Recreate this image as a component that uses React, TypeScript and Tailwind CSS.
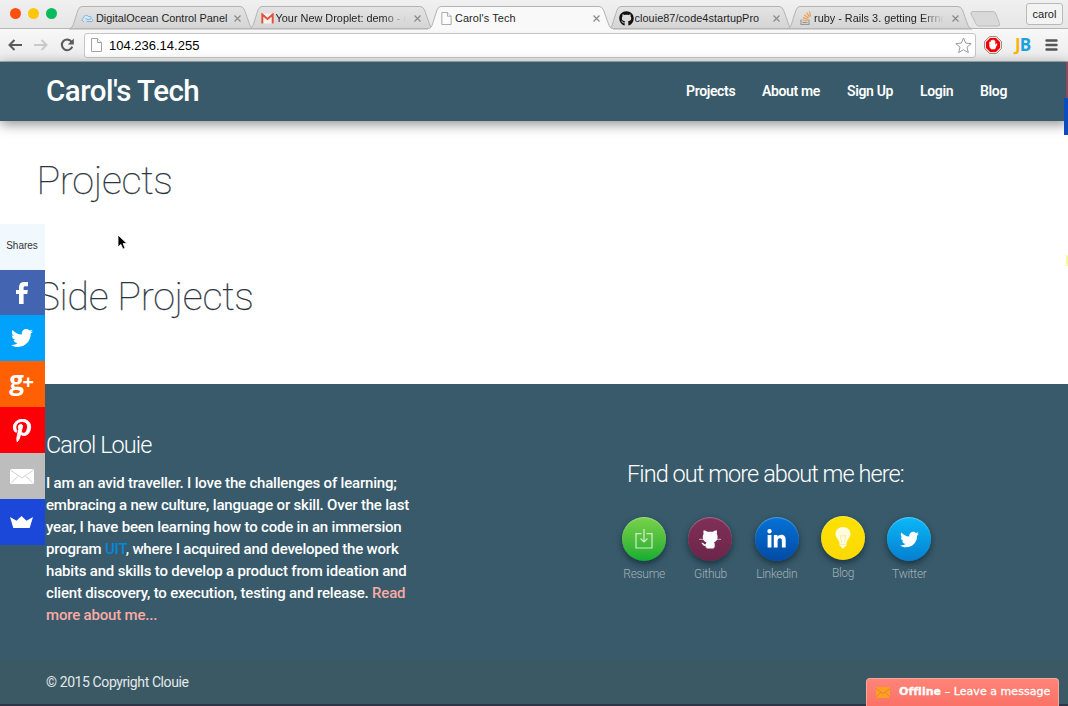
import type { ReactNode } from "react";
import { FaGithub, FaLinkedinIn, FaPinterestP, FaTwitter } from "react-icons/fa";

function PageIcon({ className }: { className: string }) {
  return (
    <svg className={className} viewBox="0 0 11 14" fill="#fdfdfd" stroke="#a3a3a3">
      <path d="M.5.5h6l4 4v9H.5z" />
      <path d="M6.5.5v4h4" />
    </svg>
  );
}

function CloseIcon() {
  return (
    <svg className="h-[7px] w-[7px] shrink-0" viewBox="0 0 7 7" stroke="#8a8a8a" strokeWidth="1.2">
      <path d="M.5.5l6 6M6.5.5l-6 6" />
    </svg>
  );
}

type TabProps = {
  icon: ReactNode;
  title: string;
  active?: boolean;
  faded?: boolean;
  titleClass: string;
};

function Tab({ icon, title, active, faded, titleClass }: TabProps) {
  return (
    <div className={"relative -mr-[6.500px] h-[23px] w-[186px] shrink-0 " + (active ? "z-10" : "")}>
      <svg className="absolute inset-0 h-[24px] w-[186px]" viewBox="0 0 186 24">
        <defs>
          <linearGradient id="tabfill" x1="0" y1="0" x2="0" y2="1">
            <stop offset="0" stopColor="#e4e4e4" />
            <stop offset="1" stopColor="#d3d3d3" />
          </linearGradient>
        </defs>
        <path
          d="M0 22.5 C3 22.5 3.5 20.5 4.5 18 L9 4 Q10.5 .5 13 .5 H171 Q174 .5 175.5 4 L180.500 18 C181.500 20.500 182 22.500 185 22.500 V24 H0z"
          fill={active ? "#f9f9f9" : "url(#tabfill)"}
        />
        <path
          d="M0 22.5 C3 22.5 3.5 20.5 4.5 18 L9 4 Q10.5 .5 13 .5 H171 Q174 .5 175.5 4 L180.500 18 C181.500 20.500 182 22.500 185 22.500"
          fill="none"
          stroke="#b4b4b4"
        />
        {!active && <path d="M0 22.500H186" stroke="#b5b5b5" />}
      </svg>
      <div className="relative flex h-[24px] items-center pl-[11px]">
        <span className="flex w-[15px] shrink-0 items-center justify-center">{icon}</span>
        <span
          className={
            "ml-px w-[134px] overflow-hidden whitespace-nowrap text-[10.9px] leading-[14px] text-[#1f1f1f] " +
            titleClass +
            (faded ? " [mask-image:linear-gradient(to_right,black_80%,transparent_97%)]" : "")
          }
        >
          {title}
        </span>
        <span className="ml-[4px] flex">
          <CloseIcon />
        </span>
      </div>
    </div>
  );
}

function CloudIcon() {
  return (
    <svg className="h-[9px] w-[13px]" viewBox="0 0 13 9" fill="#d5e9f7" stroke="#79b5e3">
      <path d="M3 7.500C.6 7.500.3 4.600 2.400 4.100 2.600 1.200 6.300.4 7.600 2.700c1.800-.6 3.400.3 2.600 1.800C8.800 6 6 5.500 4.500 4.500M6 7.500h4.800c1.300 0 1.500-1.700.3-2.200" />
    </svg>
  );
}

function GmailIcon() {
  return (
    <svg className="h-[11px] w-[13px]" viewBox="0 0 13 11">
      <path d="M.5.500h12v10H.5z" fill="#f4f1f0" />
      <path d="M1.300 10.500V1.500l5.200 4.400 5.200-4.400v9" fill="none" stroke="#e2513b" strokeWidth="2" />
    </svg>
  );
}

function StackIcon() {
  return (
    <svg className="h-[14px] w-[12px]" viewBox="0 0 12 14" fill="none">
      <path d="M1 8.500v5h8v-5" stroke="#999" strokeWidth="1.200" />
      <path d="M2.500 11.500h5" stroke="#999" strokeWidth="1.300" />
      <path d="M2.500 9l5.200.5M3 6.600l5 1.600M4.300 4l4.300 2.900M6.600 1.700l3 4.200M9.500.4l1 5" stroke="#eda050" strokeWidth="1.200" />
    </svg>
  );
}

function BrowserChrome() {
  return (
    <div className="flex h-[62px] flex-col font-['Liberation_Sans',Arial,sans-serif]">
      <div className="flex h-[29px] items-start bg-gradient-to-b from-[#f0f0f0] to-[#e6e6e6] shadow-[inset_0_-1px_0_#b5b5b5]">
        <div className="flex w-[69px] shrink-0 gap-[7px] pt-[8px] pl-[10px]">
          <span className="h-[11px] w-[11px] rounded-full bg-[#fc4f10]" />
          <span className="h-[11px] w-[11px] rounded-full bg-[#fdc50b]" />
          <span className="h-[11px] w-[11px] rounded-full bg-[#06bc5c]" />
        </div>
        <div className="flex pt-[6px]">
          <Tab icon={<CloudIcon />} title="DigitalOcean Control Panel" titleClass="" />
          <Tab icon={<GmailIcon />} title="Your New Droplet: demo - c" titleClass="" faded />
          <Tab icon={<PageIcon className="h-[13px] w-[11px]" />} title="Carol's Tech" titleClass="tracking-[0.100px]" active />
          <Tab icon={<FaGithub className="h-[15px] w-[15px] text-[#111]" />} title="clouie87/code4startupPro" titleClass="tracking-[0.050px]" />
          <Tab icon={<StackIcon />} title="ruby - Rails 3. getting Errno" titleClass="" faded />
        </div>
        <svg className="mt-[11px] ml-[3px] h-[16px] w-[31px] shrink-0" viewBox="0 0 31 16">
          <path d="M3 .5h20q2 0 3 2.500l3.500 9.500q.8 2.500-1.500 2.500H9q-2 0-3-2L1 3Q.300.500 3 .500z" fill="#d9d9d9" stroke="#bcbcbc" />
        </svg>
        <div className="mt-[3px] ml-[25.500px] flex h-[22px] w-[37px] shrink-0 items-center justify-center rounded-[3px] border border-[#b9b9b9] bg-[#f3f3f3] text-[11px] text-[#222]">
          carol
        </div>
      </div>
      <div className="flex h-[33px] items-center border-b border-[#a8aeb0] bg-gradient-to-b from-[#f8f8f8] to-[#ebebeb] pl-[8px]">
        <svg className="h-[12px] w-[14px]" viewBox="0 0 14 12" fill="none" stroke="#5a5a5a" strokeWidth="2">
          <path d="M14 6H1.500M6.500 1l-5 5 5 5" />
        </svg>
        <svg className="ml-[12px] h-[12px] w-[14px]" viewBox="0 0 14 12" fill="none" stroke="#c9c9c9" strokeWidth="2">
          <path d="M0 6h12.500M7.500 1l5 5-5 5" />
        </svg>
        <svg className="ml-[12px] h-[14px] w-[14px]" viewBox="0 0 14 14" fill="none" stroke="#5a5a5a" strokeWidth="2.100">
          <path d="M11.700 4.100A5.300 5.300 0 1 0 12.200 8.600" />
          <path d="M13.800.4v6H7.800z" fill="#5a5a5a" stroke="none" />
        </svg>
        <div className="ml-[10px] flex h-[25px] w-[892px] items-center rounded-[3px] border border-[#c6c6c6] bg-white pl-[6px]">
          <PageIcon className="h-[14px] w-[11px]" />
          <span className="ml-[7px] flex-1 pt-[1px] text-[13px] text-black">104.236.14.255</span>
          <svg className="mr-[3px] h-[17px] w-[17px]" viewBox="0 0 17 17" fill="#fff" stroke="#999" strokeLinejoin="round">
            <path d="M8.500 1l2.200 5.100 5.500.5-4.200 3.600 1.300 5.400-4.800-2.900-4.800 2.900L5 10.200.8 6.600l5.500-.5z" />
          </svg>
        </div>
        <svg className="ml-[8px] h-[18px] w-[18px]" viewBox="0 0 18 18">
          <path d="M5.500.7h7l4.800 4.800v7l-4.800 4.800h-7L.7 12.500v-7z" fill="#fff" stroke="#8c4a40" strokeWidth=".8" />
          <path d="M6 2h6l4 4v6l-4 4H6l-4-4V6z" fill="#f00505" />
          <path d="M5.300 9.800V6q.8-1 1.500 0V4.500q.8-1 1.500 0V4q.8-1 1.500 0v.7q.8-.9 1.500 0v4.100l1-1.300q1.200-.2 1 .8l-2.300 4.900H7.200Q5.300 11.800 5.300 9.800z" fill="#fff" />
        </svg>
        <div className="ml-[13px] w-[18px] font-['Open_Sans',sans-serif] text-[17px] leading-[18px] font-bold tracking-[-1px]">
          <span className="text-[#f6b60d]">J</span>
          <span className="text-[#1ba1dc]">B</span>
        </div>
        <svg className="ml-[12px] h-[12px] w-[13px]" viewBox="0 0 13 12" fill="none" stroke="#555" strokeWidth="2.400" strokeLinecap="round">
          <path d="M1.500 1.500h10M1.500 6h10M1.500 10.500h10" />
        </svg>
      </div>
    </div>
  );
}

function SiteHeader() {
  return (
    <header className="relative z-10 flex h-[59px] items-center bg-[#385a6a] pb-[1px] pl-[46px] text-white shadow-[0_3px_12px_rgba(0,0,0,0.45)]">
      <h1 className="w-[640px] text-[29.500px] leading-[34px] font-medium tracking-[-0.500px]">Carol's Tech</h1>
      <nav className="flex gap-[27px] text-[14px] font-semibold tracking-[-0.350px] whitespace-nowrap">
        <a className="w-[49px]">Projects</a>
        <a className="w-[58px]">About me</a>
        <a className="w-[46px]">Sign Up</a>
        <a className="w-[33px]">Login</a>
        <a className="w-[27px]">Blog</a>
      </nav>
    </header>
  );
}

function ShareBar() {
  const tile = "flex h-[46px] items-center justify-center pr-[2px] ";
  return (
    <aside className="absolute top-[224px] left-0 z-20 w-[45px] text-white">
      <div className="flex h-[46px] items-center justify-center bg-[#f1f9fe] pr-[1px] pb-[3px] font-['Liberation_Sans',Arial,sans-serif] text-[10px] text-[#333]">
        Shares
      </div>
      <div className="flex h-[45px] items-center justify-center bg-[#4364b0] pr-[1px]">
        <svg className="h-[22px] w-[12px]" viewBox="0 0 12 22" fill="#fff">
          <path d="M3 22V12H0V8h3V5.300C3 1.900 4.900 0 8.300 0H12v4.200H9.300C8 4.200 7.600 4.800 7.600 6v2h4.200l-.5 4H7.600v10z" />
        </svg>
      </div>
      <div className={tile + "bg-[#00a2fb]"}>
        <FaTwitter className="h-[22px] w-[22px]" />
      </div>
      <div className={tile + "bg-[#fe6003] font-['Open_Sans',sans-serif] leading-none font-bold"}>
        <span className="-mt-[8px] flex items-center">
          <span className="text-[26px] tracking-[-1.500px]">g</span>
          <span className="pt-[4px] text-[20px]">+</span>
        </span>
      </div>
      <div className={tile + "bg-[#fb0006]"}>
        <FaPinterestP className="h-[23px] w-[20px] stroke-white stroke-[22px]" />
      </div>
      <div className={tile + "bg-[#bdbdbd]"}>
        <svg className="h-[15px] w-[24px]" viewBox="0 0 24 16" preserveAspectRatio="none">
          <rect width="24" height="16" rx="2" fill="#fff" />
          <path d="M1 1.500l11 8 11-8M1.500 14.500l7-7M22.500 14.500l-7-7" fill="none" stroke="#cfcfcf" />
        </svg>
      </div>
      <div className={tile + "bg-[#1c48da]"}>
        <svg className="h-[12px] w-[23px]" viewBox="0 0 23 12" fill="#fff">
          <path d="M0 1l6.500 3.800L11.500 0l5 4.800L23 1l-3.300 11H3.300z" />
        </svg>
      </div>
    </aside>
  );
}

function DownloadGlyph() {
  return (
    <svg className="h-[20px] w-[18px]" viewBox="0 0 18 20" fill="none" stroke="#fff" strokeOpacity=".75" strokeWidth="1.200">
      <path d="M6.500 4.600H1v14.400h16V4.600h-5.500M9 0v13M5.500 9.500L9 13l3.500-3.500" />
    </svg>
  );
}

function OctocatGlyph() {
  return (
    <svg className="h-[20px] w-[24px]" viewBox="0 0 24 20">
      <path d="M1 10.300h22" stroke="#fff" strokeOpacity=".7" strokeWidth=".9" />
      <path
        d="M5.600 1.200c1.500 0 2.800.8 3.700 1.600h5.600c.9-.8 2.200-1.600 3.700-1.600.5 1.400.5 2.700.2 3.700.8 1.300 1 3 .6 4.700-.5 2.300-1.700 3.200-3.300 3.700.5.800.6 1.700.6 2.700v2.400h-1v1H8.700v-1H7.600v-1.600c-1.700.3-2.500-.3-3-1.300-.4-.8-.8-1.200-1.300-1.600 1.200-.5 2.100.1 2.600.8.500.7 1.100.8 1.800.5.100-.7.300-1.300.7-1.900-1.900-.5-3-1.500-3.400-3.700-.4-1.700-.2-3.400.6-4.700-.3-1-.3-2.300 0-3.700z"
        fill="#fff"
      />
    </svg>
  );
}

function BulbGlyph() {
  return (
    <svg className="h-[22px] w-[16px]" viewBox="0 0 16 22">
      <path d="M8 0c4.400 0 7.500 3 7.500 7 0 3.500-2.800 5-3.800 8.500H4.300C3.300 12 .5 10.500.5 7c0-4 3.100-7 7.500-7zM4.500 15.500h7v3l-1.500 1.300L8 21.800l-2-2-1.500-1.300z" fill="#fffbe0" />
      <path d="M6.600 15.500L5.200 8l1.500 1.200L8 8l1.300 1.200L10.800 8l-1.400 7.500M4.500 17.500h7" fill="none" stroke="#f2e68a" strokeWidth=".7" />
    </svg>
  );
}

const links = [
  { label: "Resume", glyph: <DownloadGlyph />, fill: "from-[#76d14a] to-[#08ad31]", shift: "" },
  { label: "Github", glyph: <OctocatGlyph />, fill: "from-[#803058] to-[#6c2549]", shift: "" },
  { label: "Linkedin", glyph: <FaLinkedinIn className="h-[21px] w-[21px]" />, fill: "from-[#0473d6] to-[#044aa5]", shift: "" },
  { label: "Blog", glyph: <BulbGlyph />, fill: "from-[#fde203] to-[#fbd903]", shift: "-mt-[1px]" },
  { label: "Twitter", glyph: <FaTwitter className="h-[19px] w-[19px]" />, fill: "from-[#0db8f8] to-[#067fd0]", shift: "" },
];

function Footer() {
  return (
    <footer className="flex flex-1 flex-col bg-[#385a6a] text-white">
      <div className="flex h-[275px]">
        <div className="w-[627px] pt-[46px] pl-[46px]">
          <h3 className="text-[23.500px] leading-[30px] font-light tracking-[-0.930px]">Carol Louie</h3>
          <p className="mt-[12px] text-[15px] leading-[22px] font-medium tracking-[-0.190px] whitespace-nowrap">
            I am an avid traveller. I love the challenges of learning;
            <br />
            embracing a new culture, language or skill. Over the last
            <br />
            year, I have been learning how to code in an immersion
            <br />
            program <a className="text-[#0488de]">UIT</a>, where I acquired and developed the work
            <br />
            habits and skills to develop a product from ideation and
            <br />
            client discovery, to execution, testing and release. <a className="text-[#fbaaa4]">Read</a>
            <br />
            <a className="text-[#fbaaa4]">more about me...</a>
          </p>
        </div>
        <div className="pt-[75px]">
          <h3 className="text-[23.500px] leading-[30px] font-light tracking-[-0.930px] whitespace-nowrap">Find out more about me here:</h3>
          <div className="mt-[28px] -ml-[16px] flex">
            {links.map((l) => (
              <div key={l.label} className={"flex w-[66.300px] flex-col items-center " + l.shift}>
                <div
                  className={
                    "flex h-[44px] w-[44px] items-center justify-center rounded-full bg-gradient-to-b shadow-[0_3px_6px_rgba(10,25,35,0.6),inset_0_1px_1px_rgba(255,255,255,0.3)] " +
                    l.fill
                  }
                >
                  {l.glyph}
                </div>
                <span className="mt-[5px] text-[12px] leading-[16px] font-light tracking-[-0.300px] text-[#a3b0b8]">{l.label}</span>
              </div>
            ))}
          </div>
        </div>
      </div>
      <div className="flex flex-1 items-center border-b-2 border-[#2d3547] bg-[#3b5965] pt-px pl-[46px] text-[14px] tracking-[-0.400px] text-[#e3e8ea]">
        © 2015 Copyright Clouie
      </div>
    </footer>
  );
}

function ChatTab() {
  return (
    <div className="absolute right-[9px] bottom-0 z-20 flex h-[28px] w-[193px] items-center rounded-t-[4px] border border-b-0 border-[#f9a79e] bg-gradient-to-b from-[#ff8478] to-[#fb7166] pl-[9px] font-['DejaVu_Sans',Verdana,sans-serif] text-[11px] whitespace-nowrap text-white">
      <svg className="h-[11px] w-[14px] shrink-0" viewBox="0 0 14 11">
        <rect width="14" height="11" rx="1" fill="#fda01f" />
        <path d="M0 1.500l7 5 7-5M0 10l5-5M14 10L9 5" fill="none" stroke="#e9823a" />
      </svg>
      <span className="ml-[9px] tracking-[0.050px] [-webkit-text-stroke:0.300px_white]">
        <b>Offline</b> – Leave a message
      </span>
    </div>
  );
}

export default function App() {
  return (
    <div className="relative flex h-[706px] w-[1068px] flex-col overflow-hidden bg-white font-[Roboto,sans-serif]">
      <BrowserChrome />
      <SiteHeader />
      <main className="flex h-[263px] flex-col pl-[36.500px] text-[#2c3440]">
        <h2 className="mt-[36px] text-[39.500px] leading-[48px] font-thin tracking-[-0.350px] [-webkit-text-stroke:0.250px_#2c3440]">Projects</h2>
        <h2 className="mt-[68px] text-[39.500px] leading-[48px] font-thin tracking-[-0.330px] [-webkit-text-stroke:0.250px_#2c3440]">Side Projects</h2>
      </main>
      <Footer />
      <ShareBar />
      <ChatTab />
      <div className="absolute top-[98px] right-0 z-20 h-[37px] w-[4px] bg-[#0b4dbf]" />
      <div className="absolute top-[62px] right-0 z-20 h-[36px] w-[2px] bg-[#8a4a5e]" />
      <div className="absolute top-[255px] right-0 z-20 h-[11px] w-[2px] bg-[#f8fa9c]" />
      <svg className="absolute top-[234px] left-[117px] z-20 h-[17px] w-[12px]" viewBox="0 0 12 17">
        <path d="M1 1v12l2.900-2.600 2 4.700 2.200-.9-2-4.600H10z" fill="#000" stroke="#fff" strokeWidth=".8" />
      </svg>
    </div>
  );
}
